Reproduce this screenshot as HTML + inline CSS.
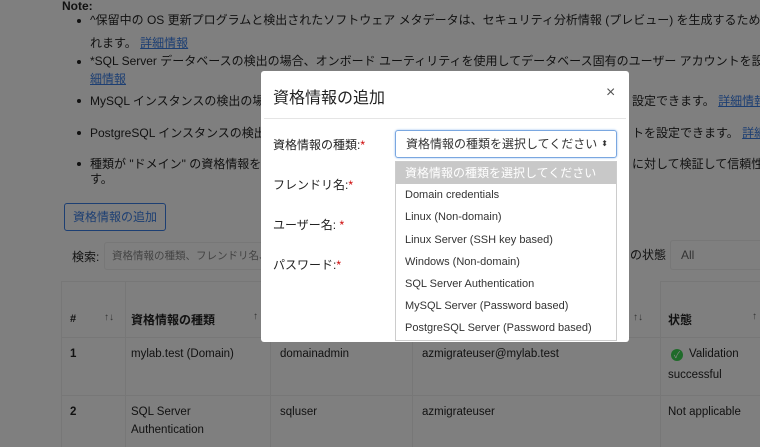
<!DOCTYPE html>
<html><head><meta charset="utf-8"><style>
*{box-sizing:border-box;margin:0;padding:0}
html,body{width:760px;height:447px;overflow:hidden}
body{background:#7f7f7f;font-family:"Liberation Sans","Noto Sans CJK JP",sans-serif;color:#111;font-size:12px;position:relative}
.a{position:absolute;white-space:nowrap}
.lk{color:#1d3f73;text-decoration:underline}
.b{position:absolute;left:77px;width:4px;height:4px;background:#111;border-radius:50%}
.cell{position:absolute;border:1px solid #777;}
.modal{position:absolute;left:261px;top:71px;width:368px;height:271px;background:#fff;border-radius:3px}
.r{color:#c00}
.dd{position:absolute;left:395px;top:161px;width:222px;height:180px;background:#fff;border:1px solid #ccc}
.dd div{height:22.2px;line-height:22px;padding-left:9px;color:#333;font-size:11px}
.t{font-size:11.5px}
</style></head><body>
<div class="a" style="left:62px;top:-1px;font-weight:bold">Note:</div>
<div class="b" style="top:19px"></div>
<div class="a" style="left:90px;top:11px">^保留中の OS 更新プログラムと検出されたソフトウェア メタデータは、セキュリティ分析情報 (プレビュー) を生成するために</div>
<div class="a" style="left:90px;top:34px">れます。 <span class="lk">詳細情報</span></div>
<div class="b" style="top:60px"></div>
<div class="a" style="left:90px;top:52px">*SQL Server データベースの検出の場合、オンボード ユーティリティを使用してデータベース固有のユーザー アカウントを設定</div>
<div class="a" style="left:90px;top:70px"><span class="lk">細情報</span></div>
<div class="b" style="top:99px"></div>
<div class="a" style="left:90px;top:92px">MySQL インスタンスの検出の場</div>
<div class="a" style="left:632px;top:92px">設定できます。 <span class="lk">詳細情報</span></div>
<div class="b" style="top:131px"></div>
<div class="a" style="left:90px;top:124px">PostgreSQL インスタンスの検出</div>
<div class="a" style="left:632px;top:124px">トを設定できます。 <span class="lk">詳細</span></div>
<div class="b" style="top:162px"></div>
<div class="a" style="left:90px;top:155px">種類が "ドメイン" の資格情報を</div>
<div class="a" style="left:632px;top:155px">に対して検証して信頼性</div>
<div class="a" style="left:90px;top:170px">す。</div>
<div class="a" style="left:64px;top:203px;width:102px;height:28px;border:1px solid #1d3f73;border-radius:3px;color:#1d3f73;line-height:26px;text-align:center">資格情報の追加</div>
<div class="a" style="left:72px;top:248px">検索:</div>
<div class="a" style="left:104px;top:242px;width:200px;height:28px;border:1px solid #777;border-radius:3px;font-size:10.5px;line-height:26px;padding-left:7px;color:#444">資格情報の種類、フレンドリ名、</div>
<div class="a" style="left:630px;top:246px">の状態</div>
<div class="a" style="left:670px;top:240px;width:90px;height:30px;border:1px solid #777;border-right:none;border-radius:3px 0 0 3px;line-height:28px;padding-left:10px;color:#333">All</div>
<div class="cell" style="left:61px;top:281px;width:65px;height:57px"></div>
<div class="cell" style="left:125px;top:281px;width:146px;height:57px"></div>
<div class="cell" style="left:660px;top:281px;width:100px;height:57px;border-right:none"></div>
<div class="cell" style="left:61px;top:337px;width:65px;height:59px"></div>
<div class="cell" style="left:125px;top:337px;width:146px;height:59px"></div>
<div class="cell" style="left:270px;top:337px;width:143px;height:59px"></div>
<div class="cell" style="left:412px;top:337px;width:249px;height:59px"></div>
<div class="cell" style="left:660px;top:337px;width:100px;height:59px;border-right:none"></div>
<div class="cell" style="left:61px;top:395px;width:65px;height:52px;border-bottom:none"></div>
<div class="cell" style="left:125px;top:395px;width:146px;height:52px;border-bottom:none"></div>
<div class="cell" style="left:270px;top:395px;width:143px;height:52px;border-bottom:none"></div>
<div class="cell" style="left:412px;top:395px;width:249px;height:52px;border-bottom:none"></div>
<div class="cell" style="left:660px;top:395px;width:100px;height:52px;border:none;border-top:1px solid #777"></div>
<div class="a" style="left:70px;top:313px;font-weight:bold;font-size:11px">#</div>
<div class="a" style="left:104px;top:312px;font-size:10px;color:#333">↑↓</div>
<div class="a" style="left:131px;top:311px;font-weight:bold">資格情報の種類</div>
<div class="a" style="left:253px;top:311px;font-size:10px;color:#333">↑</div>
<div class="a" style="left:633px;top:312px;font-size:10px;color:#333">↑↓</div>
<div class="a" style="left:668px;top:311px;font-weight:bold">状態</div>
<div class="a" style="left:752px;top:311px;font-size:10px;color:#333">↑</div>
<div class="a t" style="left:70px;top:348px;font-weight:bold">1</div>
<div class="a t" style="left:131px;top:348px">mylab.test (Domain)</div>
<div class="a t" style="left:280px;top:348px">domainadmin</div>
<div class="a t" style="left:422px;top:348px">azmigrateuser@mylab.test</div>
<div class="a" style="left:671px;top:349px;width:12px;height:12px;border-radius:50%;background:#1f6b2a;color:#888;font-size:9px;line-height:12px;text-align:center">✓</div>
<div class="a t" style="left:689px;top:348px">Validation</div>
<div class="a t" style="left:668px;top:369px">successful</div>
<div class="a t" style="left:70px;top:406px;font-weight:bold">2</div>
<div class="a t" style="left:131px;top:406px">SQL Server</div>
<div class="a t" style="left:131px;top:424px">Authentication</div>
<div class="a t" style="left:280px;top:406px">sqluser</div>
<div class="a t" style="left:422px;top:406px">azmigrateuser</div>
<div class="a t" style="left:668px;top:406px">Not applicable</div>
<div class="modal">
<div class="a" style="left:12px;top:13px;font-size:16px;color:#222">資格情報の追加</div>
<div class="a" style="left:345px;top:13px;font-size:16px;color:#555">×</div>
<div class="a" style="left:3px;top:47px;width:362px;height:1px;background:#e5e5e5"></div>
<div class="a" style="left:12px;top:65px;font-size:12px;color:#222">資格情報の種類:<span class="r">*</span></div>
<div class="a" style="left:12px;top:105px;font-size:12px;color:#222">フレンドリ名:<span class="r">*</span></div>
<div class="a" style="left:12px;top:145px;font-size:12px;color:#222">ユーザー名: <span class="r">*</span></div>
<div class="a" style="left:12px;top:185px;font-size:12px;color:#222">パスワード:<span class="r">*</span></div>
<div class="a" style="left:134px;top:59px;width:222px;height:28px;border:1px solid #7aa7e0;border-radius:3px;box-shadow:0 0 2px #9cc0f0;padding-left:10px;line-height:26px;font-size:12px;color:#333">資格情報の種類を選択してください<span style="position:absolute;right:8px;font-size:8px">⬍</span></div>
</div>
<div class="dd">
<div style="background:#c8c8c8;color:#fff;font-size:12px">資格情報の種類を選択してください</div>
<div>Domain credentials</div>
<div>Linux (Non-domain)</div>
<div>Linux Server (SSH key based)</div>
<div>Windows (Non-domain)</div>
<div>SQL Server Authentication</div>
<div>MySQL Server (Password based)</div>
<div>PostgreSQL Server (Password based)</div>
</div>
</body></html>
